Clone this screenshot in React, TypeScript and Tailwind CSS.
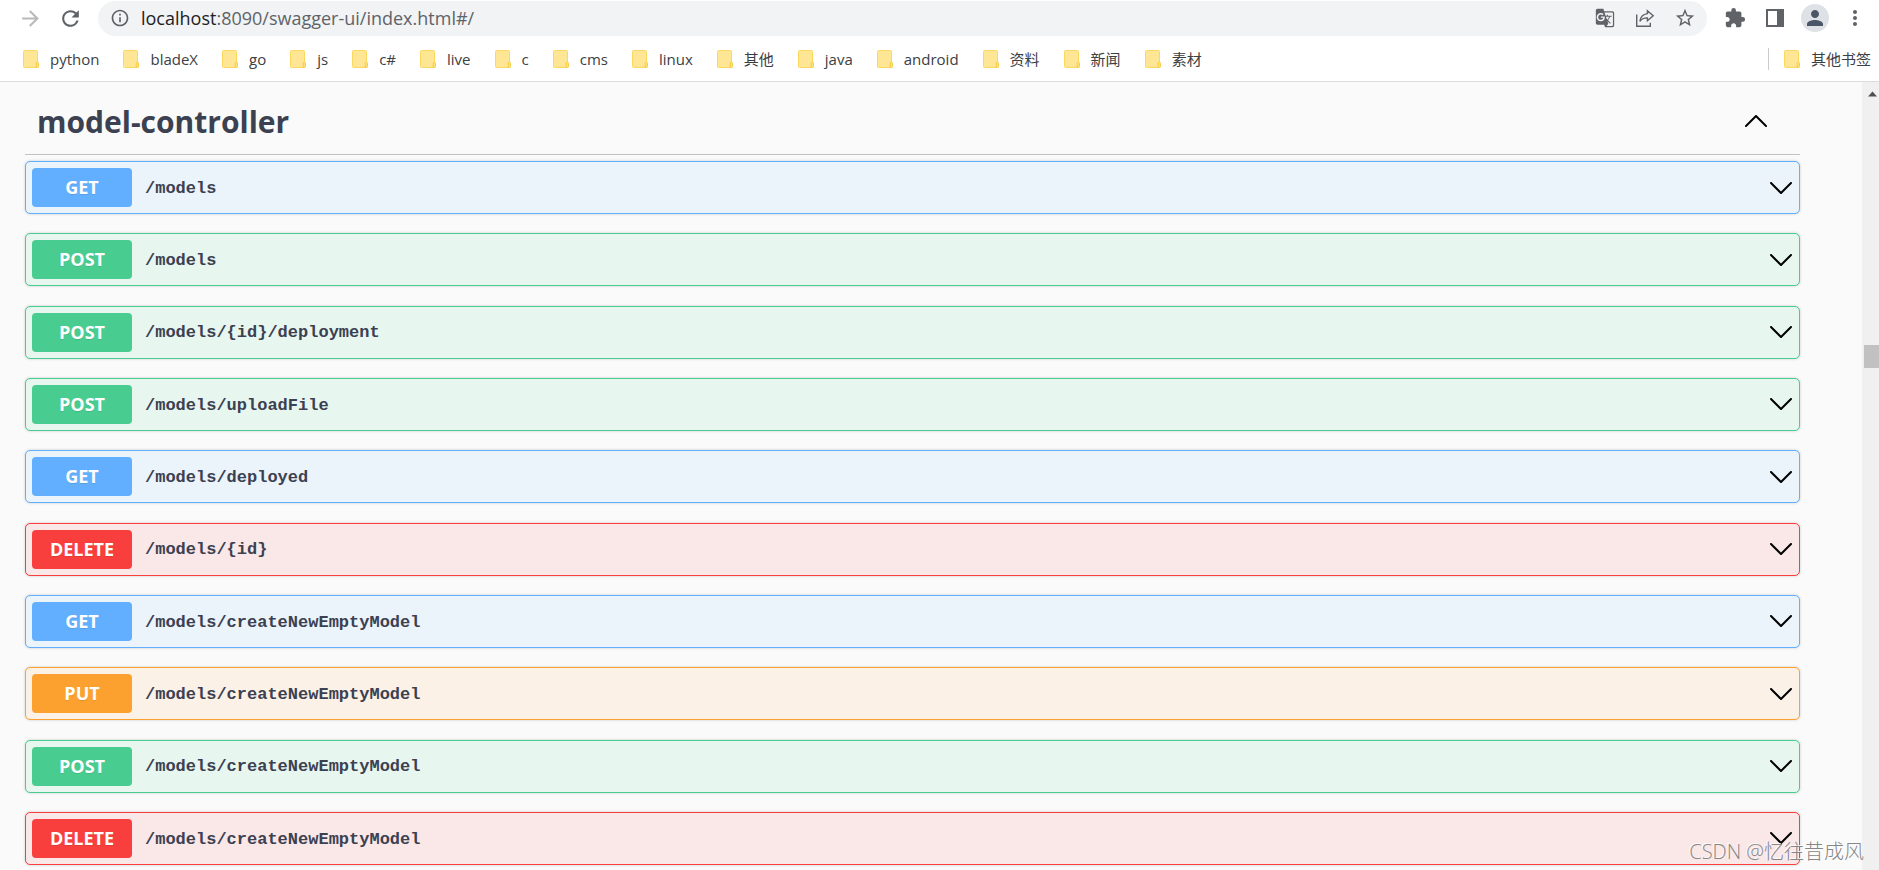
import React from 'react';
import {
  MdArrowForward,
  MdExtension,
  MdGTranslate,
  MdInfoOutline,
  MdMoreVert,
  MdPerson,
  MdRefresh,
  MdStarBorder,
} from 'react-icons/md';

type Method = 'GET' | 'POST' | 'PUT' | 'DELETE';

const operations: { method: Method; path: string }[] = [
  { method: 'GET', path: '/models' },
  { method: 'POST', path: '/models' },
  { method: 'POST', path: '/models/{id}/deployment' },
  { method: 'POST', path: '/models/uploadFile' },
  { method: 'GET', path: '/models/deployed' },
  { method: 'DELETE', path: '/models/{id}' },
  { method: 'GET', path: '/models/createNewEmptyModel' },
  { method: 'PUT', path: '/models/createNewEmptyModel' },
  { method: 'POST', path: '/models/createNewEmptyModel' },
  { method: 'DELETE', path: '/models/createNewEmptyModel' },
];

const tones: Record<Method, { block: string; badge: string }> = {
  GET: { block: 'border-[#61affe] bg-[#ebf3fb]', badge: 'bg-[#61affe]' },
  POST: { block: 'border-[#49cc90] bg-[#e8f6f0]', badge: 'bg-[#49cc90]' },
  PUT: { block: 'border-[#fca130] bg-[#fbf1e6]', badge: 'bg-[#fca130]' },
  DELETE: { block: 'border-[#f93e3e] bg-[#fae7e7]', badge: 'bg-[#f93e3e]' },
};

const bookmarks = [
  'python', 'bladeX', 'go', 'js', 'c#', 'live', 'c', 'cms', 'linux',
  '其他', 'java', 'android', '资料', '新闻', '素材',
];

function FolderIcon() {
  return (
    <svg width="16" height="18" viewBox="0 0 16 18" className="shrink-0" aria-hidden="true">
      <rect x="0.5" y="0.5" width="14" height="17" rx="1" fill="#ffe694" stroke="#fbd85f" />
      <path d="M13.2 17.5v-4.2c0-1.6 2.3-1.6 2.3 0v3.2a1 1 0 0 1-1 1z" fill="#ffe07a" stroke="#f5cd45" />
    </svg>
  );
}

function ShareIcon() {
  return (
    <svg width="20" height="20" viewBox="0 0 20 20" fill="none" stroke="#5f6368" strokeWidth="1.4" aria-hidden="true">
      <path d="M1.7 6.5v11.8h13.6v-3.6" />
      <path d="M12.4 2.7l5.8 5-5.8 5V9.9c-3.6 0-5.9 1-7.5 3.5.5-4.2 3.2-7.2 7.5-7.8z" strokeLinejoin="miter" />
    </svg>
  );
}

function SidePanelIcon() {
  return (
    <svg width="18" height="18" viewBox="0 0 18 18" aria-hidden="true">
      <path fill="#5f6368" fillRule="evenodd" d="M0 0h18v18H0zM2 2v14h9V2z" />
    </svg>
  );
}

function Chevron({ up = false }: { up?: boolean }) {
  return (
    <svg width="22" height="12" viewBox="0 0 22 12" fill="none" stroke="#000" strokeWidth="2" strokeLinecap="round" strokeLinejoin="round" aria-hidden="true">
      <path d={up ? 'M1 11 11 1l10 10' : 'M1 1l10 10L21 1'} />
    </svg>
  );
}

function ToolButton({ label, children }: { label: string; children: React.ReactNode }) {
  return (
    <button type="button" aria-label={label} className="flex w-10 items-center justify-center">
      {children}
    </button>
  );
}

function Bookmark({ label }: { label: string }) {
  return (
    <a href="#" className="flex items-center gap-[11px] whitespace-nowrap">
      <FolderIcon />
      <span>{label}</span>
    </a>
  );
}

function BrowserBar() {
  return (
    <header className="border-b border-[#dadce0] bg-white text-[#5f6368]">
      <div className="flex items-center pt-px pr-1">
        <div className="flex w-[98px] items-center gap-[15px] pb-px pl-[18px]">
          <button type="button" aria-label="Forward" className="text-[#bababa]">
            <MdArrowForward size={25} />
          </button>
          <button type="button" aria-label="Reload">
            <MdRefresh size={25} />
          </button>
        </div>
        <div className="flex h-[35px] flex-1 items-center rounded-full bg-[#f1f3f4] pr-[2px] pb-px pl-3">
          <div className="flex flex-1 items-center gap-[11px]">
            <MdInfoOutline size={20} />
            <div className="text-[18px] leading-6">
              <span className="text-[#202124]">localhost</span>:8090/swagger-ui/index.html#/
            </div>
          </div>
          <ToolButton label="Translate"><MdGTranslate size={20} /></ToolButton>
          <ToolButton label="Share"><ShareIcon /></ToolButton>
          <ToolButton label="Bookmark"><MdStarBorder size={22} /></ToolButton>
        </div>
        <div className="flex items-center pb-px pl-2">
          <ToolButton label="Extensions"><MdExtension size={22} /></ToolButton>
          <ToolButton label="Side panel"><SidePanelIcon /></ToolButton>
          <ToolButton label="Profile">
            <span className="flex size-7 items-center justify-center rounded-full bg-[#dee1e6] text-[#4a5568]">
              <MdPerson size={24} />
            </span>
          </ToolButton>
          <ToolButton label="Menu"><MdMoreVert size={24} /></ToolButton>
        </div>
      </div>
      <nav className="flex h-[45px] items-center justify-between pt-px pr-2 pl-[23px] text-[15px] text-[#3c4043]">
        <div className="flex gap-6">
          {bookmarks.map((label) => (
            <Bookmark key={label} label={label} />
          ))}
        </div>
        <div className="flex items-center border-l border-[#c8cacd] pl-[15px]">
          <Bookmark label="其他书签" />
        </div>
      </nav>
    </header>
  );
}

function Operation({ method, path }: { method: Method; path: string }) {
  const tone = tones[method];
  return (
    <li>
      <button
        type="button"
        className={`flex w-full items-center rounded-[5px] border p-[6px] pr-[7px] text-left shadow-[0_0_3px_rgba(0,0,0,0.19)] ${tone.block}`}
      >
        <span className={`w-[100px] rounded text-center text-[18px] leading-[39px] font-bold text-white [text-shadow:0_1px_0_rgba(0,0,0,0.1)] ${tone.badge}`}>
          {method}
        </span>
        <span className="flex-1 pt-[2px] pl-[13px] font-['Liberation_Mono',monospace] text-[17px] font-bold">{path}</span>
        <Chevron />
      </button>
    </li>
  );
}

function ScrollBar() {
  return (
    <div className="flex w-[17px] flex-col items-end bg-[#f0f0f0] pt-[9px]" aria-hidden="true">
      <svg width="13" height="6" viewBox="0 0 13 6" className="mb-[248px]">
        <path d="M2 5.5 6.5 0.5 11 5.5z" fill="#505050" />
      </svg>
      <div className="h-[23px] w-[15px] bg-[#c1c1c1]" />
    </div>
  );
}

export default function App() {
  return (
    <div className="relative flex h-screen flex-col overflow-hidden bg-[#fafafa] font-['Open_Sans','Noto_Sans_CJK_SC',sans-serif] text-[#3b4151]">
      <BrowserBar />
      <div className="flex min-h-0 flex-1">
        <main className="flex flex-1 flex-col pr-[62px] pb-[5px] pl-[25px]">
          <h2 className="border-b border-[#3b4151]/30">
            <button type="button" className="flex h-[72px] w-full items-center justify-between pt-[6px] pr-[33px] pl-3 text-left text-[30px] font-bold">
              model-controller
              <Chevron up />
            </button>
          </h2>
          <ul className="flex flex-1 flex-col justify-between pt-[6px]">
            {operations.map((op, i) => (
              <Operation key={i} {...op} />
            ))}
          </ul>
        </main>
        <ScrollBar />
      </div>
      <div className="absolute right-[15px] bottom-[6px] text-[20px] leading-6 font-light text-[#868686] [text-shadow:-1px_-1px_0_rgba(255,255,255,0.8)]">
        CSDN @忆往昔成风
      </div>
    </div>
  );
}
